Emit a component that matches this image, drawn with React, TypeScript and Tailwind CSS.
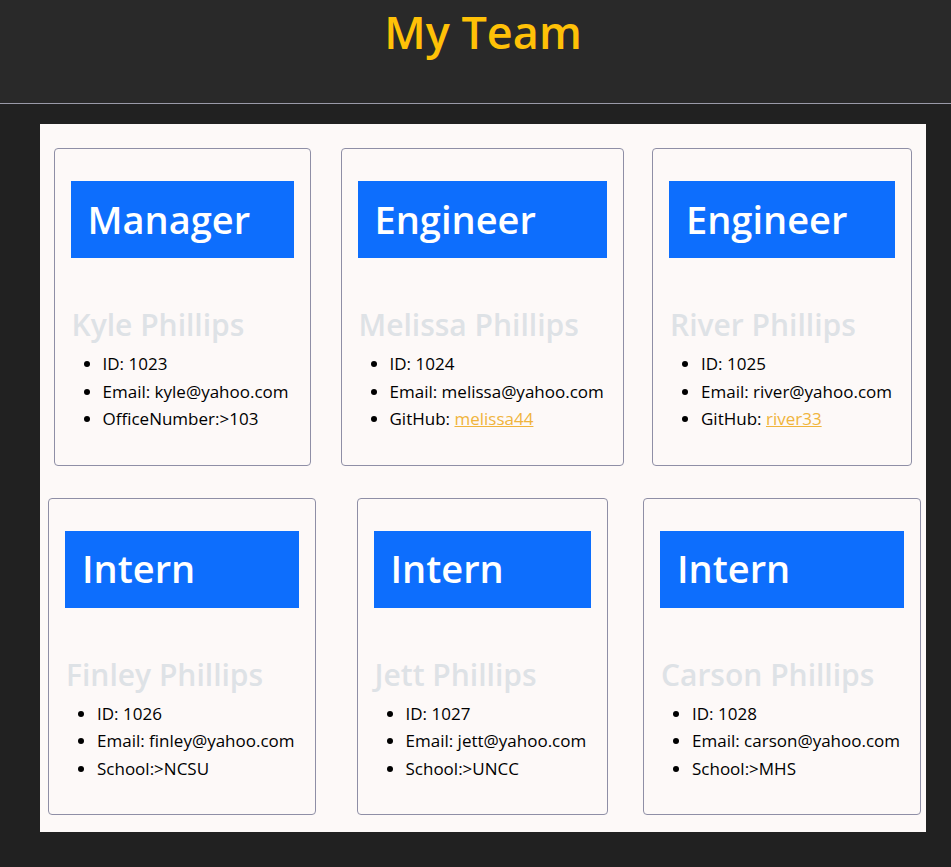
import React from "react";

type Member = {
  role: string;
  name: string;
  id: number;
  email: string;
  extra: { label: string; value: string; link?: boolean };
  width: string;
};

const team: Member[] = [
  { role: "Manager", name: "Kyle Phillips", id: 1023, email: "kyle@yahoo.com", extra: { label: "OfficeNumber:>", value: "103" }, width: "w-[257px]" },
  { role: "Engineer", name: "Melissa Phillips", id: 1024, email: "melissa@yahoo.com", extra: { label: "GitHub: ", value: "melissa44", link: true }, width: "w-[283px]" },
  { role: "Engineer", name: "River Phillips", id: 1025, email: "river@yahoo.com", extra: { label: "GitHub: ", value: "river33", link: true }, width: "w-[260px]" },
  { role: "Intern", name: "Finley Phillips", id: 1026, email: "finley@yahoo.com", extra: { label: "School:>", value: "NCSU" }, width: "w-[268px]" },
  { role: "Intern", name: "Jett Phillips", id: 1027, email: "jett@yahoo.com", extra: { label: "School:>", value: "UNCC" }, width: "w-[251px]" },
  { role: "Intern", name: "Carson Phillips", id: 1028, email: "carson@yahoo.com", extra: { label: "School:>", value: "MHS" }, width: "w-[278px]" },
];

const Card = ({ m }: { m: Member }) => {
  return (
    <div className={`${m.width} justify-self-center rounded-[4px] border border-[#8f8fa6] px-4 pt-8 pb-8`}>
      <div className="flex h-[77px] items-center bg-[#0d6efd] px-[17px]">
        <h1 className="text-[38px] font-semibold leading-[1.2] text-white">{m.role}</h1>
      </div>
      <h2 className="mt-[49px] pl-[1px] text-[30px] font-semibold leading-[1.2] text-[#dee2e6]">{m.name}</h2>
      <ul className="mt-[7px] list-disc pl-[32px] text-[17px] leading-[27.5px] text-black">
        <li>ID: {m.id}</li>
        <li className="whitespace-nowrap">Email: {m.email}</li>
        <li>
          {m.extra.label}
          {m.extra.link ? (
            <a href="#" className="text-[#f0b43c] underline">
              {m.extra.value}
            </a>
          ) : (
            m.extra.value
          )}
        </li>
      </ul>
    </div>
  );
};

export default function App() {
  return (
    <div className="min-h-[867px] bg-[#212121]" style={{ fontFamily: '"Open Sans", "Noto Sans", sans-serif' }}>
      <header className="h-[104px] border-b border-[#9a9aa8] bg-[#292929] pl-10 pr-[25px]">
        <h1 className="pt-[5px] text-center text-[45px] font-semibold leading-[1.2] text-[#ffc107]">My Team</h1>
      </header>
      <main className="pl-10 pr-[25px] pt-5 pb-9">
        <div className="flex justify-center bg-[#fdf9f8] pt-6 pb-[17px]">
          <div className="mr-[2px] grid w-[900px] shrink-0 grid-cols-[300px_300px_300px] gap-y-[32px]">
            {team.map((m) => (
              <Card key={m.name} m={m} />
            ))}
          </div>
        </div>
      </main>
    </div>
  );
}
